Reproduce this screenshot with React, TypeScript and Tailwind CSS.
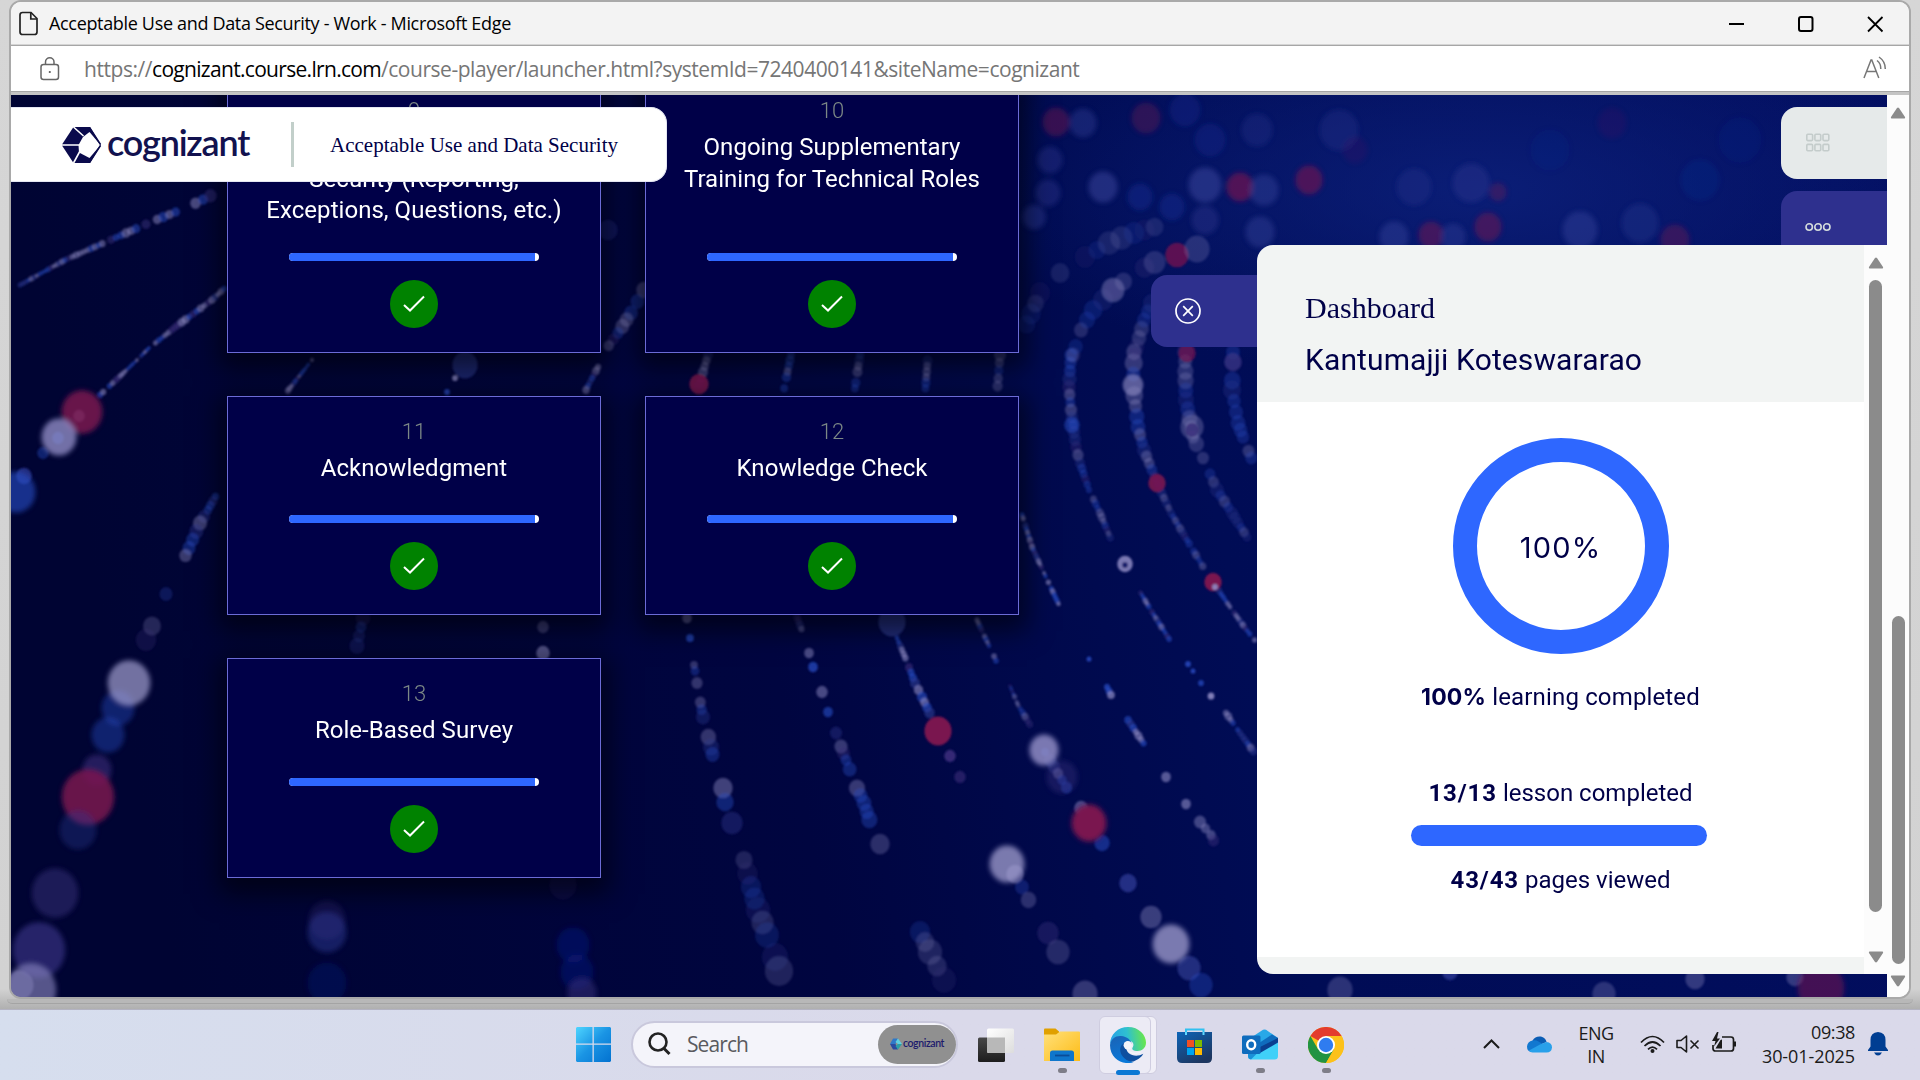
import React from "react";

type Dot = [number, number, number, string, number?];

const B = "#2a50c8";
const W = "#8f8cc4";
const D = "#2c3a92";
const R = "#7a1450";
const P = "#3a2f7c";

// Strings of light: [x, y, radius] waypoints; beads are strung between them.
const strings: { pts: [number, number, number][]; o: number }[] = [
  { pts: [[20, 285, 2.5], [65, 260, 3], [106, 242, 4], [151, 222, 5], [188, 207, 6], [218, 192, 7]], o: 0.5 },
  { pts: [[100, 395, 4], [116, 380, 3.5], [135, 362, 2], [149, 348, 2.5], [178, 325, 4], [212, 300, 3.5], [227, 286, 3]], o: 0.55 },
  { pts: [[218, 492, 4], [208, 510, 5], [200, 523, 7], [189, 548, 7], [182, 563, 9]], o: 0.4 },
  { pts: [[166, 594, 7], [158, 612, 10], [146, 640, 11], [139, 660, 13]], o: 0.25 },
  { pts: [[312, 360, 2], [286, 393, 3]], o: 0.5 },
  { pts: [[598, 367, 4], [590, 382, 3], [584, 394, 4]], o: 0.5 },
  { pts: [[644, 290, 9], [631, 313, 9], [618, 333, 6], [604, 352, 6]], o: 0.35 },
  { pts: [[363, 618, 8], [359, 636, 6], [355, 656, 9]], o: 0.3 },
  { pts: [[708, 355, 5], [703, 372, 5], [697, 392, 5]], o: 0.4 },
  { pts: [[791, 355, 5], [783, 394, 5]], o: 0.4 },
  { pts: [[860, 355, 5], [854, 394, 5]], o: 0.35 },
  { pts: [[928, 355, 5], [925, 394, 5]], o: 0.35 },
  { pts: [[1000, 355, 6], [997, 394, 6]], o: 0.3 },
  { pts: [[694, 665, 5], [699, 695, 6], [703, 717, 7], [711, 747, 8], [714, 762, 7]], o: 0.35 },
  { pts: [[744, 860, 10], [751, 887, 12], [758, 910, 12], [767, 935, 14], [775, 957, 13], [783, 985, 15]], o: 0.22 },
  { pts: [[797, 617, 4], [803, 633, 4]], o: 0.4 },
  { pts: [[836, 733, 6], [846, 760, 7], [857, 788, 8], [864, 803, 8], [872, 828, 9]], o: 0.38 },
  { pts: [[897, 638, 3], [907, 662, 4], [915, 683, 5], [922, 697, 6], [932, 718, 5]], o: 0.6 },
  { pts: [[1022, 515, 3], [1032, 547, 3], [1044, 573, 2.5], [1060, 607, 3]], o: 0.6 },
  { pts: [[977, 620, 3], [983, 633, 3], [992, 652, 3], [998, 665, 4]], o: 0.5 },
  { pts: [[1010, 686, 2], [1018, 705, 3], [1032, 728, 4]], o: 0.4 },
  { pts: [[1050, 760, 6], [1062, 780, 6], [1071, 795, 6]], o: 0.45 },
  { pts: [[1022, 887, 9], [1035, 913, 11]], o: 0.3 },
  { pts: [[920, 932, 12], [930, 952, 12], [944, 980, 13], [954, 996, 12]], o: 0.22 },
  { pts: [[1071, 355, 7], [1069, 387, 7], [1071, 410, 6], [1076, 447, 6], [1080, 463, 5], [1089, 490, 4], [1100, 513, 4], [1112, 542, 3.5]], o: 0.35 },
  { pts: [[1139, 590, 2.5], [1152, 612, 3], [1171, 642, 3]], o: 0.55 },
  { pts: [[1226, 713, 4], [1240, 733, 3], [1256, 755, 4]], o: 0.5 },
  { pts: [[1134, 352, 9], [1133, 385, 9], [1138, 427, 8], [1144, 450, 7], [1157, 483, 5], [1171, 513, 4], [1187, 540, 4], [1205, 570, 3.5]], o: 0.35 },
  { pts: [[1215, 585, 3], [1230, 607, 3], [1245, 628, 3], [1257, 643, 3]], o: 0.55 },
  { pts: [[1185, 352, 8], [1186, 400, 8], [1193, 437, 8], [1203, 458, 7], [1217, 490, 7], [1232, 513, 6], [1250, 542, 4]], o: 0.28 },
  { pts: [[1233, 352, 9], [1232, 390, 9], [1238, 423, 8], [1243, 437, 8], [1254, 465, 6]], o: 0.3 },
  { pts: [[1107, 687, 3.5], [1113, 699, 4]], o: 0.7 },
  { pts: [[1128, 720, 4], [1136, 732, 4], [1146, 747, 4]], o: 0.6 },
  { pts: [[1200, 822, 6], [1211, 835, 6], [1216, 846, 6]], o: 0.45 },
  { pts: [[1022, 335, 10], [1040, 293, 11], [1060, 273, 11], [1085, 257, 11], [1109, 243, 11], [1134, 233, 11], [1165, 224, 10]], o: 0.16 },
  { pts: [[1073, 355, 8], [1081, 330, 9], [1093, 310, 10], [1113, 290, 10], [1134, 273, 10], [1165, 257, 11]], o: 0.24 },
  { pts: [[1134, 356, 8], [1144, 320, 9], [1156, 295, 9]], o: 0.25 },
];

const blobs: Dot[] = [
  [82, 412, 21, R, 0.85], [79, 416, 6, W, 0.7], [59, 437, 18, W, 0.8], [58, 438, 6, B, 0.6], [43, 453, 6, B, 0.4],
  [16, 492, 20, B, 0.6], [24, 476, 8, D, 0.8],
  [118, 708, 17, B, 0.4], [129, 683, 22, "#a3a0d0", 0.7], [108, 735, 17, B, 0.4], [97, 770, 15, P, 0.6], [88, 797, 27, R, 0.85], [78, 830, 19, D, 0.35],
  [55, 893, 24, P, 0.5], [39, 950, 27, "#4a44a0", 0.5], [31, 990, 26, W, 0.6], [20, 985, 14, W, 0.4],
  [465, 365, 13, D, 0.6], [455, 378, 3, W, 0.8], [447, 392, 3, B, 0.8], [608, 230, 10, D, 0.3],
  [543, 627, 6, W, 0.35], [543, 653, 7, W, 0.6],
  [327, 920, 19, P, 0.3], [327, 932, 20, D, 0.5], [327, 983, 20, "#0a1870", 0.4],
  [563, 885, 14, P, 0.2], [573, 945, 17, "#0a1a80", 0.45], [577, 972, 17, "#0a1a80", 0.45], [582, 993, 15, P, 0.5],
  [699, 384, 10, R, 0.9], [687, 618, 5, W, 0.5], [690, 638, 4, B, 0.7],
  [723, 788, 10, W, 0.45], [725, 802, 9, B, 0.4], [732, 823, 11, D, 0.4],
  [809, 653, 5, W, 0.5], [813, 667, 5, B, 0.7], [822, 692, 6, W, 0.5], [828, 712, 5, B, 0.6], [880, 844, 10, W, 0.3],
  [892, 622, 14, D, 0.7], [938, 731, 14, R, 1], [950, 756, 6, P, 0.9], [960, 777, 6, P, 0.6],
  [1044, 750, 15, W, 0.85], [1045, 752, 4, B, 0.6], [1062, 777, 16, P, 0.4], [1081, 808, 7, W, 0.5], [1089, 823, 18, R, 1], [1102, 843, 8, B, 0.5],
  [1128, 883, 9, D, 0.8], [1151, 917, 11, W, 0.4], [1171, 944, 19, "#a3a0d0", 0.75], [1189, 968, 12, D, 0.7], [1201, 985, 12, B, 0.35],
  [1007, 864, 18, "#a3a0d0", 0.75], [1015, 874, 9, W, 0.5], [1048, 933, 11, P, 0.4], [1058, 952, 12, W, 0.25], [1085, 994, 13, W, 0.35],
  [1072, 425, 8, B, 0.5], [1133, 385, 11, W, 0.45], [1192, 427, 12, W, 0.35], [1192, 430, 7, P, 0.8],
  [1125, 564, 8, W, 0.85], [1125, 565, 3, "#141a6a", 1], [1157, 483, 9, R, 0.9], [1213, 582, 9, R, 1], [1215, 587, 3, W, 0.9],
  [1188, 664, 3, B, 0.8], [1193, 671, 2.5, B, 0.8], [1201, 683, 3, B, 0.7], [1211, 696, 3.5, W, 0.9], [1089, 659, 2.5, B, 0.8],
  [1166, 777, 5, W, 0.6], [1186, 804, 5, W, 0.6],
  [1113, 290, 12, W, 0.4], [1177, 255, 12, R, 0.75], [1197, 249, 13, W, 0.25],
  [1187, 353, 9, R, 0.7], [1233, 362, 9, P, 0.7],
  [1821, 988, 24, R, 0.55], [1340, 990, 13, W, 0.3], [1604, 994, 12, W, 0.3], [1695, 979, 10, W, 0.35], [1795, 977, 9, W, 0.35], [1450, 972, 8, D, 0.8],
];

// Out-of-focus lights in the far distance.
const haze: Dot[] = [
  [1056, 122, 14, R, 0.45], [1083, 123, 14, D, 0.45], [1146, 118, 15, R, 0.35], [1050, 160, 13, D, 0.4], [1048, 193, 13, D, 0.4], [1103, 187, 15, "#4450a8", 0.45],
  [1140, 197, 13, "#15309a", 0.4], [1172, 207, 13, "#15309a", 0.4], [1205, 185, 17, "#4450a8", 0.45], [1240, 187, 14, R, 0.65], [1264, 190, 15, "#4450a8", 0.35], [1034, 217, 12, D, 0.5],
  [1205, 220, 14, D, 0.4], [1260, 232, 15, "#4450a8", 0.35], [1309, 180, 14, R, 0.6], [1257, 130, 16, D, 0.3], [1339, 130, 20, D, 0.3],
  [1414, 187, 18, D, 0.3], [1471, 183, 19, D, 0.4], [1498, 192, 9, R, 0.35], [1394, 237, 15, "#4450a8", 0.35], [1431, 235, 13, R, 0.5], [1453, 237, 13, D, 0.5],
  [1488, 227, 14, R, 0.5], [1580, 230, 18, "#4450a8", 0.35], [1640, 223, 19, D, 0.35], [1675, 240, 15, R, 0.4], [1612, 123, 15, R, 0.12], [1355, 150, 13, R, 0.12],
  [1700, 180, 20, "#15309a", 0.2], [1740, 140, 22, "#15309a", 0.15], [1550, 150, 20, "#15309a", 0.15], [1185, 110, 16, "#15309a", 0.3], [1210, 140, 16, "#15309a", 0.3],
];

function beads(): Dot[] {
  const tones = [B, W, B, D, W, B, P, W];
  const out: Dot[] = [];
  strings.forEach((s, si) => {
    let n = si;
    for (let i = 0; i < s.pts.length - 1; i++) {
      const [x1, y1, r1] = s.pts[i];
      const [x2, y2, r2] = s.pts[i + 1];
      const len = Math.hypot(x2 - x1, y2 - y1);
      const count = Math.max(1, Math.round(len / ((r1 + r2) * 0.6)));
      for (let k = 0; k < count; k++) {
        const t = k / count;
        n = (n * 5 + 3 + k) % 97;
        if (n % 9 === 4) continue;
        out.push([x1 + (x2 - x1) * t, y1 + (y2 - y1) * t, (r1 + (r2 - r1) * t) * (0.8 + (n % 4) * 0.08), tones[n % 8], s.o]);
      }
    }
  });
  return out;
}

function Lights({ dots }: { dots: Dot[] }) {
  return (
    <>
      {dots.map(([x, y, r, c, o], i) => (
        <ellipse key={i} cx={x} cy={y} rx={r * 0.97} ry={r * 1.03} fill={c} opacity={o} />
      ))}
    </>
  );
}

function Backdrop() {
  return (
    <svg className="absolute inset-0 h-full w-full" viewBox="11 95 1876 902" preserveAspectRatio="none">
      <defs>
        <linearGradient id="sea" x1="0" y1="0.1" x2="1" y2="0">
          <stop offset="0" stopColor="#000433" />
          <stop offset="0.35" stopColor="#000540" />
          <stop offset="0.6" stopColor="#000c55" />
          <stop offset="1" stopColor="#020e60" />
        </linearGradient>
        <radialGradient id="glow">
          <stop offset="0" stopColor="#0e2380" stopOpacity="0.75" />
          <stop offset="1" stopColor="#0e2380" stopOpacity="0" />
        </radialGradient>
        <filter id="soft" x="-5%" y="-5%" width="110%" height="110%">
          <feGaussianBlur stdDeviation="1.1" />
        </filter>
        <filter id="softer" x="-5%" y="-5%" width="110%" height="110%">
          <feGaussianBlur stdDeviation="2.4" />
        </filter>
      </defs>
      <rect x="11" y="95" width="1876" height="902" fill="url(#sea)" />
      <ellipse cx="1480" cy="190" rx="520" ry="190" fill="url(#glow)" />
      <g filter="url(#softer)"><Lights dots={haze} /></g>
      <g filter="url(#soft)">
        <Lights dots={beads()} />
        <Lights dots={blobs.filter((b) => b[2] < 15)} />
      </g>
      <g filter="url(#softer)"><Lights dots={blobs.filter((b) => b[2] >= 15)} /></g>
    </svg>
  );
}

function Lesson({ no, lines, spacer = false }: { no: string; lines: string[]; spacer?: boolean }) {
  return (
    <div className="flex flex-col items-center border border-[#6b6bd6] bg-[#000048] pt-[21px] font-[Roboto,sans-serif] shadow-[0_8px_24px_8px_rgba(0,0,0,0.55)]">
      <div className="h-[35px] text-[22px] leading-[28px] font-light text-[#7c8886]">{no}</div>
      {spacer && <div className="h-[31.5px]" />}
      <div className="text-center text-[24px] leading-[31.5px] font-[450] tracking-[0.04px] whitespace-nowrap text-white">
        {lines.map((l) => (
          <div key={l}>{l}</div>
        ))}
      </div>
      <div className="mt-auto flex h-[8px] w-[250px] shrink-0 overflow-hidden rounded-full bg-white">
        <div className="w-[246px] bg-[#2e67ff]" />
      </div>
      <div className="mt-[19px] mb-6 flex size-12 shrink-0 items-center justify-center rounded-full bg-[#008200]">
        <svg width="24" height="24" viewBox="0 0 24 24" fill="none" stroke="#fff" strokeWidth="2">
          <path d="M2 13 L8 18.5 L22 4.5" />
        </svg>
      </div>
    </div>
  );
}

function Arrow({ down = false }: { down?: boolean }) {
  return (
    <svg width="16" height="12" viewBox="0 0 16 12" fill="#8b8b8b">
      {down ? <path d="M1.5 0.5h13q1 .3.5 1.400L9 11q-1 .9-2 0L1 1.900q-.5-1.100.5-1.400z" /> : <path d="M1.500 11.500h13q1-.3.500-1.400L9 1q-1-.9-2 0L1 10.100q-.5 1.100.5 1.400z" />}
    </svg>
  );
}

function Header() {
  return (
    <div className="absolute top-3 left-0 flex h-[75px] w-[656px] items-center rounded-r-2xl border-y border-r border-[#e4e6f2] bg-white pl-[50px] text-[#000048]">
      <svg width="41" height="38" viewBox="0 0 41 38" className="shrink-0">
        <path d="M12.500 1h16.500L40 19 29 37H12.500L1 19.500v-1z" fill="#0a0a4c" />
        <path d="M22 11L28.500 6 39.500 19 28.500 32 18 26.500 17.500 19z" fill="#fff" />
        <path d="M0 19h18M12.500 1l10 9M12.500 37l6-11" stroke="#fff" strokeWidth="1.600" />
        <path d="M28.500 1.500L39.500 18.500M28.500 36.500L39.500 19.500" stroke="#0a0a4c" strokeWidth="1.500" />
      </svg>
      <span className="ml-[5px] h-[54px] w-[147px] font-[Lato,sans-serif] text-[36px] leading-[48px] font-semibold tracking-[-1.200px] text-[#12124f]">cognizant</span>
      <span className="ml-[37px] h-[45px] w-[3px] bg-[#c2cfca]" />
      <span className="mt-0.5 ml-9 font-['Liberation_Serif',serif] text-[21px] whitespace-nowrap">Acceptable Use and Data Security</span>
    </div>
  );
}

function Dashboard() {
  return (
    <div className="absolute top-[150px] right-0 flex h-[729px] w-[630px] overflow-hidden rounded-l-2xl bg-[#f2f4f3] text-[#000048]">
      <div className="flex w-[607px] flex-col font-[Roboto,sans-serif]">
        <div className="h-[157px] pt-[42px] pl-12">
          <div className="font-['Liberation_Serif',serif] text-[30px] leading-[42px]">Dashboard</div>
          <div className="mt-[10px] text-[30px] leading-[42px] tracking-[0.120px]">Kantumajji Koteswararao</div>
        </div>
        <div className="flex h-[555px] flex-col items-center bg-white pt-9 text-[24px] leading-[32px]">
          <div className="flex size-[216px] items-center justify-center rounded-full border-[24px] border-[#2e67ff] pt-[3px] font-[Inter,sans-serif] text-[29px] tracking-[1.200px]">100%</div>
          <div className="mt-[27px] tracking-[0.150px]"><b className="font-[Inter,sans-serif] text-[23px] tracking-[0.200px]">100%</b> learning completed</div>
          <div className="mt-16"><b className="tracking-[0.900px]">13/13</b> lesson completed</div>
          <div className="mt-[16px] mr-[3px] h-[21px] w-[296px] rounded-full bg-[#2e67ff]" />
          <div className="mt-[18px]"><b className="tracking-[0.900px]">43/43</b> pages viewed</div>
        </div>
      </div>
      <div className="flex w-[23px] flex-col items-center bg-[#fcfcfc] pt-3 pb-[11px]">
        <Arrow />
        <div className="mt-[11px] h-[632px] w-[13px] rounded-full bg-[#8b8b8b]" />
        <div className="mt-auto"><Arrow down /></div>
      </div>
    </div>
  );
}

function Course() {
  return (
    <div className="relative h-[902px] w-[1876px] overflow-hidden">
      <Backdrop />
      <div className="relative -mt-5 ml-[216px] grid w-fit grid-cols-[374px_374px] grid-rows-[278px_219px_220px] gap-x-11 gap-y-[43px]">
        <Lesson no="9" spacer lines={["Security (Reporting,", "Exceptions, Questions, etc.)"]} />
        <Lesson no="10" lines={["Ongoing Supplementary", "Training for Technical Roles"]} />
        <Lesson no="11" lines={["Acknowledgment"]} />
        <Lesson no="12" lines={["Knowledge Check"]} />
        <Lesson no="13" lines={["Role-Based Survey"]} />
      </div>
      <Header />
      <div className="absolute top-3 right-0 flex w-[106px] flex-col gap-3">
        <div className="flex h-[72px] items-center rounded-l-2xl bg-[#e6eaea] pl-[25px]">
          <svg width="24" height="20" viewBox="0 0 24 20" fill="none" stroke="#c4cccb" strokeWidth="1.600">
            {[0.8, 8.9, 17].map((x) => [1.2, 11.4].map((y) => <rect key={`${x}-${y}`} x={x} y={y} width="5.800" height="6.400" rx="1" />))}
          </svg>
        </div>
        <div className="flex h-[72px] items-center rounded-l-2xl bg-[#2e308e] pl-6">
          <svg width="26" height="10" viewBox="0 0 26 10" fill="none" stroke="#d4dcdc" strokeWidth="1.600">
            <circle cx="4.200" cy="5" r="3.200" /><circle cx="13" cy="5" r="3.200" /><circle cx="21.800" cy="5" r="3.200" />
          </svg>
        </div>
      </div>
      <div className="absolute top-[180px] right-[630px] flex h-[72px] w-[106px] items-center rounded-l-2xl bg-[#2e308e] pl-6">
        <svg width="26" height="26" viewBox="0 0 26 26" fill="none" stroke="#fff" strokeWidth="1.700">
          <circle cx="13" cy="13" r="12" /><path d="M8.200 8.200l9.600 9.600M17.800 8.200l-9.600 9.600" />
        </svg>
      </div>
      <Dashboard />
    </div>
  );
}

function EdgeWindow() {
  return (
    <div className="relative mx-[9px] h-[999px] w-[1902px] overflow-hidden rounded-xl border-2 border-[#a9a9a9] bg-white font-['Open_Sans',sans-serif]">
      <div className="flex h-[42px] items-center bg-[#f3f3f3] pl-2">
        <svg width="20" height="25" viewBox="0 0 20 25" fill="none" stroke="#222" strokeWidth="1.700">
          <path d="M3.500 1.500h8.500l6 6v13.500q0 2.500-2.500 2.500h-12q-2.500 0-2.500-2.500V4q0-2.500 2.500-2.500z" /><path d="M11.800 1.500V8H18" />
        </svg>
        <span className="ml-[10px] pt-px text-[18px] tracking-[-0.330px] whitespace-nowrap text-black">Acceptable Use and Data Security - Work - Microsoft Edge</span>
        <svg className="mt-[2px] mr-[24px] ml-auto" width="156" height="18" viewBox="0 0 156 18" fill="none" stroke="#000" strokeWidth="2">
          <path d="M0 9h15" /><rect x="70" y="2" width="13.500" height="14" rx="2" /><path d="M139 2l14.500 14.500M153.500 2L139 16.500" strokeWidth="1.800" />
        </svg>
      </div>
      <div className="h-[2px] border-b border-[#a6a6a6] bg-[#d4d4d4]" />
      <div className="flex h-[45px] items-center bg-white pt-px pl-[29px] text-[21px] whitespace-nowrap">
        <svg width="20" height="24" viewBox="0 0 20 24" fill="none" stroke="#666" strokeWidth="1.500">
          <rect x="1" y="7.500" width="17.500" height="15" rx="2.500" /><path d="M5.500 7.500V5a4.250 4.250 0 0 1 8.500 0v2.500" /><circle cx="9.800" cy="15" r="1.100" fill="#555" stroke="none" />
        </svg>
        <span className="mt-0.5 ml-6 tracking-[-0.450px] text-[#767676]">https://</span>
        <span className="mt-0.5 tracking-[-0.690px] text-black">cognizant.course.lrn.com</span>
        <span className="mt-0.5 tracking-[-0.463px] text-[#767676]">/course-player/launcher.html?systemId=7240400141&amp;siteName=cognizant</span>
        <svg className="mr-[21px] mb-[3px] ml-auto" width="25" height="23" viewBox="0 0 25 23" fill="none" stroke="#777" strokeWidth="1.500">
          <path d="M1 22L8 4h.8l7 18M3.500 15.500h9.800" /><path d="M14 4.500q4 3 3.800 8.500M16 1q6.500 4.500 6.300 12" />
        </svg>
      </div>
      <div className="h-1 border-t border-[#a6a6a6] bg-[#c4c4c4]" />
      <div className="flex">
        <Course />
        <div className="flex h-[902px] w-[22px] flex-col items-center bg-[#fcfcfc] pt-3 pb-[10px]">
          <Arrow />
          <div className="mt-[497px] h-[348px] w-[13px] rounded-full bg-[#8b8b8b]" />
          <div className="mt-auto"><Arrow down /></div>
        </div>
      </div>
    </div>
  );
}

function Slot({ children, dot = false }: { children: React.ReactNode; dot?: boolean }) {
  return (
    <div className="relative flex h-14 w-[66px] items-center justify-center">
      {children}
      {dot && <span className="absolute bottom-0 left-[29px] h-[5px] w-[9px] rounded-full bg-[#7e7d88]" />}
    </div>
  );
}

function Taskbar() {
  return (
    <div className="flex h-[71px] border-t border-[#b3b3c2] bg-gradient-to-r from-[#d6deee] via-[#dad9ea] to-[#dad9ea] to-60% font-['Open_Sans',sans-serif] text-[#1b1b1b]">
      <div className="flex w-[1360px] shrink-0 items-center pl-[576px] pb-0.5">
        <svg width="35" height="35" viewBox="0 0 35 35">
          <defs><linearGradient id="win" x1="0" y1="0" x2="1" y2="1"><stop offset="0" stopColor="#4ed5ff" /><stop offset=".5" stopColor="#1a94e4" /><stop offset="1" stopColor="#0372d0" /></linearGradient></defs>
          <path fill="url(#win)" d="M1 0h15.500v16.500H0V1zM17.800 0H34l1 1v15.500H17.800zM0 17.800h16.500V35H1l-1-1zM17.800 17.800H35V34l-1 1H17.800z" />
        </svg>
        <div className="ml-5 flex h-[47px] w-[327px] items-center rounded-full border-2 border-[#c9c8dc] bg-[#f4f4fa] pl-[15px]">
          <svg width="23" height="24" viewBox="0 0 23 24" fill="none" stroke="#222" strokeWidth="2.600">
            <circle cx="10" cy="10" r="8.500" /><path d="M16 16.500l5.500 5.500" strokeWidth="3" />
          </svg>
          <span className="mt-0.5 ml-4 text-[21px] tracking-[-0.900px] text-[#5a5a60]">Search</span>
          <span className="mr-0 ml-auto flex h-[39px] w-[78px] items-center justify-center rounded-full bg-[#909090]">
            <svg width="12" height="12" viewBox="0 0 12 12"><path d="M3 .5h5L5.500 6 0 6z" fill="#2f78c8" /><path d="M0 6h5.500L8 11.500H3z" fill="#2a4aa0" /><path d="M8 .5L12 6H8L5.500 4z" fill="#5fd0e0" /><path d="M12 6l-4 5.500L5.500 8 8 6z" fill="#2aa0a8" /></svg>
            <span className="ml-px pb-[3px] font-[Lato,sans-serif] text-[10.500px] leading-[12px] font-semibold tracking-[-0.400px] text-[#1c1a6c]">cognizant</span>
          </span>
        </div>
        <div className="ml-[5px] flex pt-0.5">
          <Slot>
            <svg width="36" height="35" viewBox="0 0 36 35">
              <defs><linearGradient id="tv" x2="0" y2="1"><stop stopColor="#484848" /><stop offset="1" stopColor="#1d1d1d" /></linearGradient><linearGradient id="tw" x2="1" y2="1"><stop stopColor="#fff" /><stop offset="1" stopColor="#ddd" /></linearGradient></defs>
              <rect y="9.500" width="27" height="24.500" rx="1.500" fill="url(#tv)" /><rect x="9" y=".5" width="27" height="24.500" rx="1.500" fill="url(#tw)" /><path d="M9 9.500h18v15.500H10.500L9 23.500z" fill="#b8b8b8" />
            </svg>
          </Slot>
          <Slot dot>
            <svg width="36" height="34" viewBox="0 0 36 34">
              <defs><linearGradient id="fo" x2="1" y2="1"><stop stopColor="#ffe07a" /><stop offset="1" stopColor="#fdbc16" /></linearGradient></defs>
              <path d="M0 1.500Q0 .5 1 .5h10.500L15 3.500v5H0z" fill="#e0a000" /><path d="M0 6.500h12L16 3.500h19q1 0 1 1V33H0z" fill="url(#fo)" /><path d="M6 33V25q0-2.500 2.500-2.500h19q2.500 0 2.500 2.500v8z" fill="#0f76cc" /><path d="M11 27.500h14.500" stroke="#0a4c98" strokeWidth="1.800" />
            </svg>
          </Slot>
          <div className="relative flex h-14 w-[66px] items-center justify-center">
            <span className="absolute -top-px right-1 h-[58px] w-8 rounded-md border border-[#ceccdf] bg-[#f0eff7]" />
            <span className="absolute -top-px left-[4px] h-[58px] w-[52px] rounded-md border border-[#cfcde0] bg-[#ecebf5]" />
            <svg className="relative" width="36" height="36" viewBox="0 0 36 36">
              <defs>
                <linearGradient id="ea" x1="0" y1=".6" x2="1" y2=".5"><stop stopColor="#28a0e8" /><stop offset=".5" stopColor="#2ec0d0" /><stop offset="1" stopColor="#6be846" /></linearGradient>
                <linearGradient id="eb" x2=".3" y2="1"><stop stopColor="#1b62b4" /><stop offset="1" stopColor="#0a78d8" /></linearGradient>
              </defs>
              <path d="M0 18C0 7 8 0 18 0c11 0 18 8 18 15.500C36 21 32 24 27.500 24c-4 0-6-1.500-5-3.200 2-3 1-7-4-7C10 10 3 10 0 18z" fill="url(#ea)" />
              <path d="M0 18C1 11.500 6 8.500 11 9c6 .3 10.500 4.500 10.800 8.500C20 13 13.500 13.800 13.500 21c0 8 8 14 10 14C16 38.500 0 34 0 18z" fill="url(#eb)" />
              <path d="M17 14.800c-7 1.500-9 9-4 15 4 5 9.500 5.200 11 4.500 4-1.500 8-4.500 9.300-7.500-7 4-18 1.500-17-7.500q.2-2.800 2-4.500z" fill="#0f4fa0" />
              <circle cx="17.800" cy="18.300" r="4.200" fill="#f4f4fa" /><path d="M16 21q5 7 16 3.500l-2 1.500q-10 3.500-14-5z" fill="#f4f4fa" />
            </svg>
            <span className="absolute -bottom-0.5 left-[21px] h-[5px] w-6 rounded-full bg-[#0b78d4]" />
          </div>
          <Slot>
            <svg width="35" height="35" viewBox="0 0 35 35">
              <defs><linearGradient id="st" x2=".6" y2="1"><stop stopColor="#0d65b8" /><stop offset="1" stopColor="#1d3660" /></linearGradient></defs>
              <path d="M9 7V1.500h17.500V7" fill="none" stroke="#30c0f0" strokeWidth="2" /><path d="M0 4h35v26q0 5-5 5H5q-5 0-5-5z" fill="url(#st)" /><path d="M9 4v3M26.500 4v3" stroke="#60d8ff" strokeWidth="2" />
              <path fill="#f25022" d="M10 12h7v7h-7z" /><path fill="#7fba00" d="M18 12h7v7h-7z" /><path fill="#00a4ef" d="M10 20h7v7h-7z" /><path fill="#ffb900" d="M18 20h7v7h-7z" />
            </svg>
          </Slot>
          <Slot dot>
            <svg width="36" height="32" viewBox="0 0 36 32">
              <path d="M7 10L21 .8q1.500-.8 3 0L36 9v6L22 24 7 15z" fill="#28a8e8" /><path d="M14 16L30 5.500l6 3.500v4L20 22z" fill="#0f6cbd" />
              <path d="M6 17l12 4 18-9.500V27q0 3.500-3.500 3.500H9.500Q6 30.500 6 27z" fill="#40d0f8" />
              <path d="M17 18.500L36 9v4.500L18 24z" fill="#0a3f90" /><path d="M6 23l11-.5-8 8Q6 30 6 27z" fill="#1a90d8" />
              <rect y="6.500" width="18.500" height="18.500" rx="1.500" fill="#0f6cbd" /><ellipse cx="9.200" cy="15.700" rx="4" ry="4.500" fill="none" stroke="#fff" strokeWidth="2.400" />
            </svg>
          </Slot>
          <Slot dot>
            <svg width="36" height="36" viewBox="0 0 36 36">
              <circle cx="18" cy="18" r="18" fill="#fcc11a" /><path d="M18 18L2.400 9A18 18 0 0 1 33.600 9z" fill="#e33b2e" /><path d="M2.400 9A18 18 0 0 0 18 36l7.800-13.500L18 18 10.200 22.500z" fill="#229342" /><path d="M18 9h15.600A18 18 0 0 1 18 36l7.800-13.500z" fill="#fcc11a" />
              <circle cx="18" cy="18" r="9" fill="#fff" /><circle cx="18" cy="18" r="7.200" fill="#2f7cf0" />
            </svg>
          </Slot>
        </div>
      </div>
      <div className="flex flex-1 items-center pb-0.5">
        <svg className="ml-[123px]" width="17" height="10" viewBox="0 0 17 10" fill="none" stroke="#1b1b1b" strokeWidth="2"><path d="M1 9l7.500-7.500L16 9" /></svg>
        <svg className="ml-[27px]" width="25" height="17" viewBox="0 0 25 17"><path d="M5.500 4.500Q8 .5 12.500.5c4 0 6.500 2.500 7 5.500L10 10z" fill="#0a5cb4" /><path d="M5.500 4.500q3-.8 6 1L19 10 4 16Q0 15 0 10.500 .5 5.500 5.500 4.500z" fill="#1278d0" /><path d="M2 14.500L13 8.500l6.500-2.500Q25 6.500 25 11.500 24.500 16.500 19.500 16.500H5.500Q3 16.500 2 14.500z" fill="#28a0ea" /></svg>
        <div className="mt-0.5 ml-[26px] w-[36px] text-center text-[18px] leading-[23px] tracking-[-0.500px]"><div>ENG</div><div>IN</div></div>
        <svg className="ml-[26px]" width="25" height="19" viewBox="0 0 25 19" fill="none" stroke="#1b1b1b" strokeWidth="1.700"><path d="M1 7.500q11.500-12 23 0M4.500 11q8-8 16 0M8 14.300q4.500-4.500 9 0" /><circle cx="12.500" cy="16" r="2" fill="#1b1b1b" stroke="none" /></svg>
        <svg className="ml-[11px]" width="24" height="18" viewBox="0 0 24 18" fill="none" stroke="#1b1b1b" strokeWidth="1.600"><path d="M1 5.500h4L10.500 1v16L5 12.500H1z" strokeLinejoin="round" /><path d="M14.500 5.500l8 8M22.500 5.500l-8 8" /></svg>
        <svg className="mb-1 ml-3" width="25" height="21" viewBox="0 0 25 21" fill="none" stroke="#1b1b1b" strokeWidth="1.700"><path d="M10 5h9q2.500 0 2.500 2.500v9Q21.500 19 19 19H3.500Q1 19 1 16.500V13" /><path d="M22.500 9.500v5" strokeWidth="3" /><path d="M5 0L0 9h3.500L2 14.500 8 6.500H5L6.500 0zM10 7.500v9H3.500L8.500 8z" fill="#1b1b1b" stroke="none" /></svg>
        <div className="ml-auto text-right text-[18px] leading-[24px]"><div className="tracking-[-0.380px]">09:38</div><div className="tracking-[-0.090px]">30-01-2025</div></div>
        <svg className="mr-8 ml-[13px]" width="20" height="24" viewBox="0 0 20 24" fill="#003e92"><path d="M10 0q7.500.5 7.500 8v6.500L20 18v1H0v-1l2.500-3.500V8Q2.500.5 10 0zM6 20.500h8q-1.500 3-4 3t-4-3z" /></svg>
      </div>
    </div>
  );
}

export default function App() {
  return (
    <div className="flex h-[1080px] w-[1920px] flex-col overflow-hidden bg-[#d4d4d4]">
      <div className="h-[1009px] bg-gradient-to-b from-[#d6d6d6] via-[#d2d2d2] via-98% to-[#b0b0b0]">
        <EdgeWindow />
        <div className="mx-[7px] h-[5px] rounded-b-xl border-b border-[#a4a4a4] bg-[#b8b8b8]" />
      </div>
      <Taskbar />
    </div>
  );
}
